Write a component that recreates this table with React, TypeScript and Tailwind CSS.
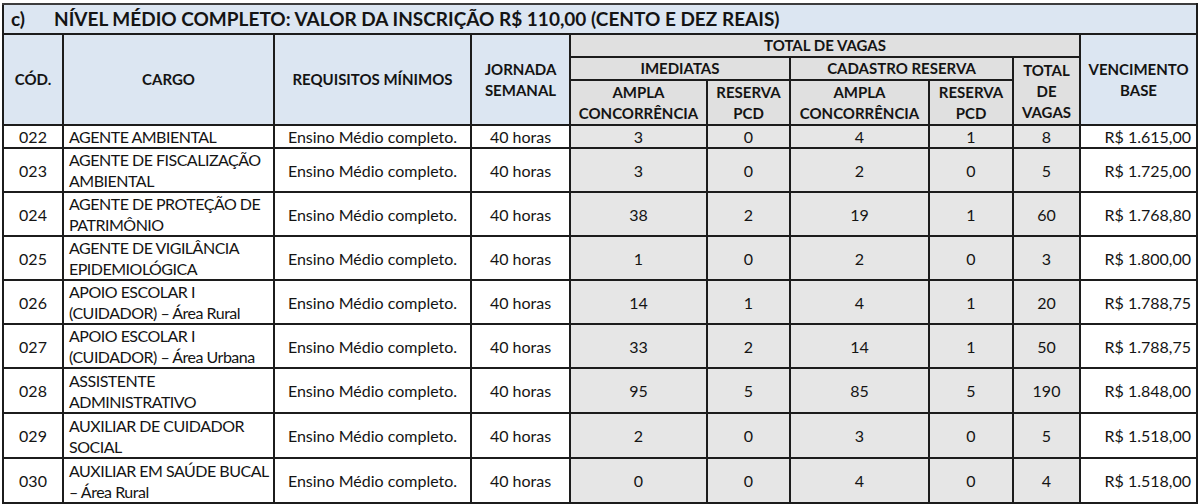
import React from 'react';

type Row = {
  cod: string;
  cargo: React.ReactNode;
  req: string;
  jornada: string;
  imAmpla: string;
  imPcd: string;
  cadAmpla: string;
  cadPcd: string;
  total: string;
  venc: string;
  h: string;
};

const ROWS: Row[] = [
  { cod: '022', cargo: 'AGENTE AMBIENTAL', req: 'Ensino Médio completo.', jornada: '40 horas', imAmpla: '3', imPcd: '0', cadAmpla: '4', cadPcd: '1', total: '8', venc: 'R$ 1.615,00', h: 'h-[21px]' },
  { cod: '023', cargo: <>AGENTE DE FISCALIZAÇÃO<br />AMBIENTAL</>, req: 'Ensino Médio completo.', jornada: '40 horas', imAmpla: '3', imPcd: '0', cadAmpla: '2', cadPcd: '0', total: '5', venc: 'R$ 1.725,00', h: 'h-[44px]' },
  { cod: '024', cargo: <>AGENTE DE PROTEÇÃO DE<br />PATRIMÔNIO</>, req: 'Ensino Médio completo.', jornada: '40 horas', imAmpla: '38', imPcd: '2', cadAmpla: '19', cadPcd: '1', total: '60', venc: 'R$ 1.768,80', h: 'h-[44px]' },
  { cod: '025', cargo: <>AGENTE DE VIGILÂNCIA<br />EPIDEMIOLÓGICA</>, req: 'Ensino Médio completo.', jornada: '40 horas', imAmpla: '1', imPcd: '0', cadAmpla: '2', cadPcd: '0', total: '3', venc: 'R$ 1.800,00', h: 'h-[44px]' },
  { cod: '026', cargo: <>APOIO ESCOLAR I<br />(CUIDADOR) – Área Rural</>, req: 'Ensino Médio completo.', jornada: '40 horas', imAmpla: '14', imPcd: '1', cadAmpla: '4', cadPcd: '1', total: '20', venc: 'R$ 1.788,75', h: 'h-[44px]' },
  { cod: '027', cargo: <>APOIO ESCOLAR I<br />(CUIDADOR) – Área Urbana</>, req: 'Ensino Médio completo.', jornada: '40 horas', imAmpla: '33', imPcd: '2', cadAmpla: '14', cadPcd: '1', total: '50', venc: 'R$ 1.788,75', h: 'h-[44px]' },
  { cod: '028', cargo: <>ASSISTENTE<br />ADMINISTRATIVO</>, req: 'Ensino Médio completo.', jornada: '40 horas', imAmpla: '95', imPcd: '5', cadAmpla: '85', cadPcd: '5', total: '190', venc: 'R$ 1.848,00', h: 'h-[45px]' },
  { cod: '029', cargo: <>AUXILIAR DE CUIDADOR<br />SOCIAL</>, req: 'Ensino Médio completo.', jornada: '40 horas', imAmpla: '2', imPcd: '0', cadAmpla: '3', cadPcd: '0', total: '5', venc: 'R$ 1.518,00', h: 'h-[45px]' },
  { cod: '030', cargo: <>AUXILIAR EM SAÚDE BUCAL<br />– Área Rural</>, req: 'Ensino Médio completo.', jornada: '40 horas', imAmpla: '0', imPcd: '0', cadAmpla: '4', cadPcd: '0', total: '4', venc: 'R$ 1.518,00', h: 'h-[45px]' },
];

const blueHead = 'border-2 border-[#1c1c1c] bg-[#dce6f2] font-bold text-center align-middle leading-[21px] text-[15px]';
const grayHead = 'border-2 border-[#1c1c1c] bg-[#e0e0e0] font-bold text-center align-middle leading-[21px] text-[15px]';
const cell = 'border-2 border-[#1c1c1c] align-middle leading-[21px]';

export default function App() {
  return (
    <div className="w-[1200px] h-[504px] overflow-hidden bg-white pl-[2px] pt-[3px] text-[#141414] font-['Lato',sans-serif] text-[16px]">
      <table className="table-fixed border-collapse w-[1194px] border-2 border-[#3d3d3d]">
        <colgroup>
          <col className="w-[60px]" />
          <col className="w-[211px]" />
          <col className="w-[197px]" />
          <col className="w-[99px]" />
          <col className="w-[137px]" />
          <col className="w-[83px]" />
          <col className="w-[139px]" />
          <col className="w-[84px]" />
          <col className="w-[67px]" />
          <col className="w-[117px]" />
        </colgroup>
        <thead>
          <tr className="h-[30px]">
            <th colSpan={10} className="border-2 border-[#1c1c1c] border-t-[#3d3d3d] bg-[#dce6f2] text-left align-middle pl-[7px] text-[19px] font-bold leading-[24px] whitespace-nowrap">
              <span className="inline-block w-[43px]">c)</span>NÍVEL MÉDIO COMPLETO: VALOR DA INSCRIÇÃO R$ 110,00 (CENTO E DEZ REAIS)
            </th>
          </tr>
          <tr className="h-[23px]">
            <th rowSpan={3} className={blueHead}>CÓD.</th>
            <th rowSpan={3} className={blueHead}>CARGO</th>
            <th rowSpan={3} className={blueHead}>REQUISITOS MÍNIMOS</th>
            <th rowSpan={3} className={blueHead}>JORNADA<br />SEMANAL</th>
            <th colSpan={5} className={grayHead}>TOTAL DE VAGAS</th>
            <th rowSpan={3} className={blueHead}>VENCIMENTO<br />BASE</th>
          </tr>
          <tr className="h-[23px]">
            <th colSpan={2} className={grayHead}>IMEDIATAS</th>
            <th colSpan={2} className={grayHead}>CADASTRO RESERVA</th>
            <th rowSpan={2} className={grayHead}>TOTAL<br />DE<br />VAGAS</th>
          </tr>
          <tr className="h-[45px]">
            <th className={grayHead}>AMPLA<br />CONCORRÊNCIA</th>
            <th className={grayHead}>RESERVA<br />PCD</th>
            <th className={grayHead}>AMPLA<br />CONCORRÊNCIA</th>
            <th className={grayHead}>RESERVA<br />PCD</th>
          </tr>
        </thead>
        <tbody>
          {ROWS.map((r) => (
            <tr key={r.cod} className={r.h}>
              <td className={`${cell} text-center`}>{r.cod}</td>
              <td className={`${cell} pl-[5px] whitespace-nowrap tracking-[-0.5px]`}>{r.cargo}</td>
              <td className={`${cell} text-center`}>{r.req}</td>
              <td className={`${cell} text-center`}>{r.jornada}</td>
              <td className={`${cell} text-center bg-[#e6e6e6]`}>{r.imAmpla}</td>
              <td className={`${cell} text-center bg-[#e6e6e6]`}>{r.imPcd}</td>
              <td className={`${cell} text-center bg-[#e6e6e6]`}>{r.cadAmpla}</td>
              <td className={`${cell} text-center bg-[#e6e6e6]`}>{r.cadPcd}</td>
              <td className={`${cell} text-center bg-[#e6e6e6]`}>{r.total}</td>
              <td className={`${cell} text-right pr-[5px]`}>{r.venc}</td>
            </tr>
          ))}
          <tr className="h-[44px]">
            <td className={cell}>&nbsp;</td>
            <td className={cell} />
            <td className={cell} />
            <td className={cell} />
            <td className={`${cell} bg-[#e6e6e6]`} />
            <td className={`${cell} bg-[#e6e6e6]`} />
            <td className={`${cell} bg-[#e6e6e6]`} />
            <td className={`${cell} bg-[#e6e6e6]`} />
            <td className={`${cell} bg-[#e6e6e6]`} />
            <td className={cell} />
          </tr>
        </tbody>
      </table>
    </div>
  );
}
